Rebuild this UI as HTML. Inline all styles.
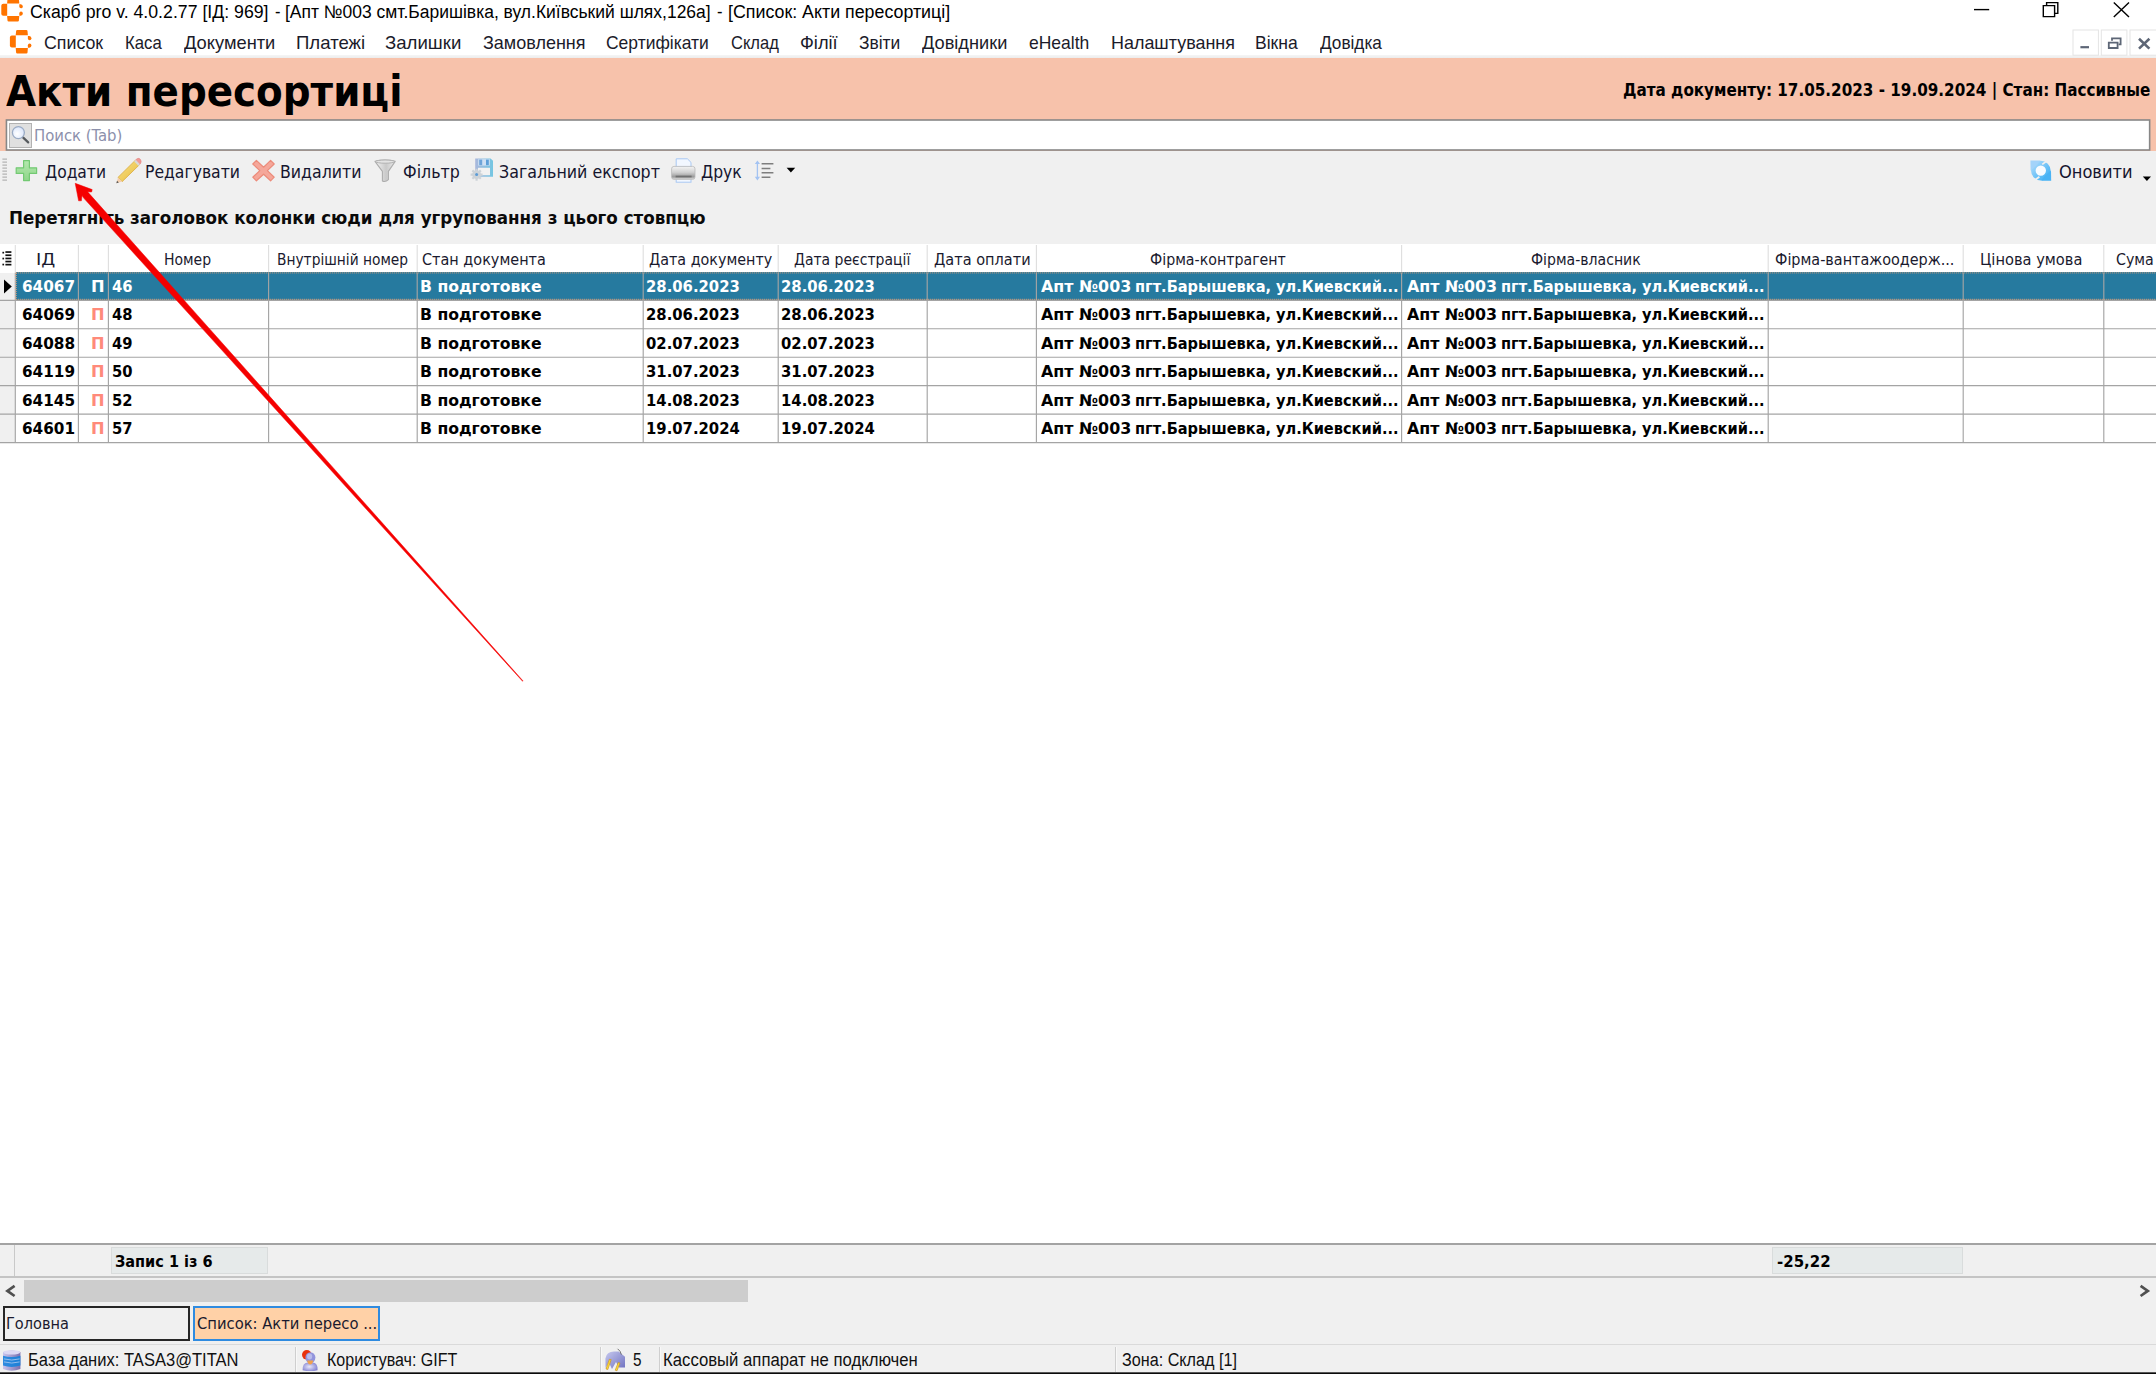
<!DOCTYPE html>
<html lang="uk">
<head>
<meta charset="utf-8">
<title>Скарб pro - Акти пересортиці</title>
<style>
html,body{margin:0;padding:0;}
body{width:2156px;height:1374px;position:relative;overflow:hidden;background:#fff;font-family:"DejaVu Sans Condensed","Liberation Sans",sans-serif;}
.a{position:absolute;}
.t{position:absolute;white-space:pre;line-height:normal;transform-origin:0 0;}
#titlebar{left:0;top:0;width:2156px;height:27px;background:#fff;}
#menubar{left:0;top:27px;width:2156px;height:28px;background:#fff;}
#menushadow{left:0;top:55px;width:2156px;height:3px;background:linear-gradient(#f6f6f6,#ececec);}
#header{left:0;top:58px;width:2156px;height:93px;background:#f7c2ab;}
#search{left:6px;top:120px;width:2144px;height:30px;background:#fff;}
#searchbtn{left:9px;top:123px;width:21px;height:23px;background:#e0e0e0;border:1px solid #b2b2b2;}
#toolbar{left:0;top:151px;width:2156px;height:42px;background:#f0f0f0;}
#grouppanel{left:0;top:193px;width:2156px;height:51px;background:#f0f0f0;}
#gridhead{left:0;top:244px;width:2156px;height:28.5px;background:#fff;}
#gridbody{left:0;top:272.5px;width:2156px;height:970px;background:#fff;}
#indic{left:0;top:272.5px;width:15px;height:170.5px;background:#f0f0f0;}
#selrow{left:15.6px;top:272.3px;width:2141px;height:27.6px;background:#267a9f;}
.hl{position:absolute;left:0;width:2156px;height:1.4px;background:#ababab;}
.vl{position:absolute;top:272.5px;width:1.3px;height:170.5px;background:#ababab;}
.svl{position:absolute;top:273px;width:1.3px;height:27px;background:#8ba9b8;}
.hvl{position:absolute;top:245px;width:1.5px;height:27px;background:#e3e3e3;}
#footer{left:0;top:1242.5px;width:2156px;height:34px;background:#f0f0f0;border-top:2.5px solid #a3a3a3;box-sizing:border-box;}
#footline{left:0;top:1276px;width:2156px;height:1.5px;background:#c4c4c4;}
#hscroll{left:0;top:1277.5px;width:2156px;height:27px;background:#f0f0f0;}
#thumb{left:23.7px;top:1279.5px;width:724.5px;height:22.5px;background:#cdcdcd;}
#tabs{left:0;top:1304px;width:2156px;height:40px;background:#f0f0f0;}
#tab1{left:3px;top:1306px;width:187px;height:35px;box-sizing:border-box;border:2px solid #262626;background:#f0f0f0;}
#tab2{left:193px;top:1306px;width:187px;height:35px;box-sizing:border-box;border:2px solid #2f8be0;background:#ffd1a7;}
#status{left:0;top:1344px;width:2156px;height:30px;background:#f0f0f0;border-top:1.5px solid #dadada;box-sizing:border-box;}
#statusbottom{left:0;top:1372px;width:2156px;height:2px;background:linear-gradient(#8c8c8c,#0a0a0a 60%);}
.ssep{position:absolute;top:1347px;width:1px;height:25px;background:#cfcfcf;border-right:1px solid #f8f8f8;}
.sumbox{position:absolute;top:1247.4px;height:27px;box-sizing:border-box;background:#e6eaea;border:1px solid #d9dcdc;}
</style>
</head>
<body>
<div id="titlebar" class="a"></div>
<div id="menubar" class="a"></div>
<div id="menushadow" class="a"></div>
<div id="header" class="a"></div>
<div id="search" class="a"></div>
<svg class="a" style="left:0;top:110px" width="2156" height="50" viewBox="0 110 2156 50"><rect x="6.45" y="120" width="2143.2" height="30" fill="none" stroke="#878787" stroke-width="1.6"/></svg>
<div id="searchbtn" class="a"></div>
<div id="toolbar" class="a"></div>
<div id="grouppanel" class="a"></div>
<div id="gridhead" class="a"></div>
<div id="gridbody" class="a"></div>
<div id="indic" class="a"></div>
<div id="selrow" class="a"></div>
<svg class="a" id="gridlines" style="left:0;top:0" width="2156" height="1374" viewBox="0 0 2156 1374">
<g stroke="#a4a4a4" stroke-width="1.15">
<path d="M0 300.35H2156"/>
<path d="M0 328.79H2156"/>
<path d="M0 357.23H2156"/>
<path d="M0 385.67H2156"/>
<path d="M0 414.11H2156"/>
<path d="M0 442.55H2156"/>
<path d="M15.30 272.5V443"/>
<path d="M78.40 272.5V443"/>
<path d="M108.40 272.5V443"/>
<path d="M268.60 272.5V443"/>
<path d="M417.20 272.5V443"/>
<path d="M643.20 272.5V443"/>
<path d="M778.20 272.5V443"/>
<path d="M927.20 272.5V443"/>
<path d="M1036.40 272.5V443"/>
<path d="M1401.60 272.5V443"/>
<path d="M1768.20 272.5V443"/>
<path d="M1963.20 272.5V443"/>
<path d="M2103.80 272.5V443"/>
</g>
<g stroke="#dedede" stroke-width="1.1">
<path d="M15.30 245V272"/>
<path d="M78.40 245V272"/>
<path d="M108.40 245V272"/>
<path d="M268.60 245V272"/>
<path d="M417.20 245V272"/>
<path d="M643.20 245V272"/>
<path d="M778.20 245V272"/>
<path d="M927.20 245V272"/>
<path d="M1036.40 245V272"/>
<path d="M1401.60 245V272"/>
<path d="M1768.20 245V272"/>
<path d="M1963.20 245V272"/>
<path d="M2103.80 245V272"/>
</g>
<g stroke="#e9a274" stroke-width="1" stroke-dasharray="1 1">
<path d="M15.8 272.9H2156"/><path d="M15.8 299.3H2156"/><path d="M16.2 273V299.5"/>
</g>
</svg>
<div id="footer" class="a"></div>
<div id="footline" class="a"></div>
<div class="a" style="left:14px;top:1245px;width:1px;height:31px;background:#c9c9c9"></div>
<div class="sumbox" style="left:111px;width:156.5px"></div>
<div class="sumbox" style="left:1771.5px;width:191.5px"></div>
<div id="hscroll" class="a"></div>
<div id="thumb" class="a"></div>
<div id="tabs" class="a"></div>
<div id="tab1" class="a"></div>
<div id="tab2" class="a"></div>
<div id="status" class="a"></div>
<div id="statusbottom" class="a"></div>
<div class="ssep" style="left:294.65px"></div>
<div class="ssep" style="left:600.45px"></div>
<div class="ssep" style="left:658.75px"></div>
<div class="ssep" style="left:1115.25px"></div>

<svg class="a" style="left:0;top:0" width="2156" height="1374" viewBox="0 0 2156 1374">
<defs>
<linearGradient id="gPlus" x1="0" y1="0" x2="0" y2="1"><stop offset="0" stop-color="#b4e8ae"/><stop offset="1" stop-color="#8fd68a"/></linearGradient>
<linearGradient id="gPen" x1="0" y1="0" x2="1" y2="1"><stop offset="0" stop-color="#f7e48a"/><stop offset="1" stop-color="#e9b93a"/></linearGradient>
<linearGradient id="gFun" x1="0" y1="0" x2="1" y2="0"><stop offset="0" stop-color="#f4f4f4"/><stop offset="0.55" stop-color="#c9c9c9"/><stop offset="1" stop-color="#ededed"/></linearGradient>
<linearGradient id="gFlop" x1="0" y1="0" x2="1" y2="0"><stop offset="0" stop-color="#aab8dc"/><stop offset="1" stop-color="#74c6e2"/></linearGradient>
<linearGradient id="gPrn" x1="0" y1="0" x2="0" y2="1"><stop offset="0" stop-color="#f4f4f4"/><stop offset="0.45" stop-color="#d2d2d2"/><stop offset="0.8" stop-color="#9a9a9a"/><stop offset="1" stop-color="#e2e2e2"/></linearGradient>
<linearGradient id="gRef" x1="0" y1="0" x2="1" y2="1"><stop offset="0" stop-color="#a9d9fb"/><stop offset="1" stop-color="#3fb0f4"/></linearGradient>
<radialGradient id="gLens" cx="0.4" cy="0.6" r="0.7"><stop offset="0" stop-color="#ffffff"/><stop offset="1" stop-color="#d6e2fb"/></radialGradient>
<linearGradient id="gDb" x1="0" y1="0" x2="1" y2="0"><stop offset="0" stop-color="#c9c4ec"/><stop offset="1" stop-color="#7a6fae"/></linearGradient>
<linearGradient id="gDbB" x1="0" y1="0" x2="1" y2="0"><stop offset="0" stop-color="#2f8be0"/><stop offset="1" stop-color="#1d7fd6"/></linearGradient>
<radialGradient id="gUsr" cx="0.45" cy="0.5" r="0.6"><stop offset="0" stop-color="#e8e8fb"/><stop offset="1" stop-color="#7f7fd0"/></radialGradient>
<linearGradient id="gPlug" x1="0" y1="0" x2="1" y2="1"><stop offset="0" stop-color="#c6c8ee"/><stop offset="1" stop-color="#6f71c0"/></linearGradient>
</defs>
<!-- app logos -->
<g id="logoT" fill="#ff7400">
<path d="M8.6 -2 H17.8 Q18.8 -2 18.9 -1 L19.3 3.4 H7.1 L7.5 -1 Q7.6 -2 8.6 -2Z"/>
<path d="M3.3 3.7 H7.2 V15.7 H3.3 Q1.3 15.7 1.3 13.7 V5.7 Q1.3 3.7 3.3 3.7Z"/>
<path d="M7.1 16 H19.3 L18.9 20.6 Q18.8 21.6 17.8 21.6 H8.6 Q7.6 21.6 7.5 20.6Z"/>
<path d="M19.3 4.2 H20.8 Q22.8 4.4 22.8 6.4 Q22.8 8.3 21 8.3 Q19.3 8.3 19.3 6.5Z"/>
<path d="M19.3 15.8 H20.8 Q22.8 15.6 22.8 13.6 Q22.8 11.5 21 11.5 Q19.3 11.5 19.3 13.4Z"/>
</g>
<g id="logoM" fill="#ff7400" transform="translate(8.6 31.9)">
<path d="M8.6 -2 H17.8 Q18.8 -2 18.9 -1 L19.3 3.4 H7.1 L7.5 -1 Q7.6 -2 8.6 -2Z"/>
<path d="M3.3 3.7 H7.2 V15.7 H3.3 Q1.3 15.7 1.3 13.7 V5.7 Q1.3 3.7 3.3 3.7Z"/>
<path d="M7.1 16 H19.3 L18.9 20.6 Q18.8 21.6 17.8 21.6 H8.6 Q7.6 21.6 7.5 20.6Z"/>
<path d="M19.3 4.2 H20.8 Q22.8 4.4 22.8 6.4 Q22.8 8.3 21 8.3 Q19.3 8.3 19.3 6.5Z"/>
<path d="M19.3 15.8 H20.8 Q22.8 15.6 22.8 13.6 Q22.8 11.5 21 11.5 Q19.3 11.5 19.3 13.4Z"/>
</g>
<!-- window controls -->
<g stroke="#000" stroke-width="1.4" fill="none">
<path d="M1974 9.6 H1989.2"/>
<path d="M2043.3 5.6 H2054.6 V16.6 H2043.3Z"/>
<path d="M2046.6 5.4 V2.6 H2057.8 V13.4 H2054.8"/>
<path d="M2113.8 2.4 L2129 17 M2129 2.4 L2113.8 17"/>
</g>
<!-- MDI child buttons -->
<g fill="#fff" stroke="#e4e4e4" stroke-width="1">
<rect x="2073" y="30" width="25.4" height="25.2"/>
<rect x="2101.3" y="30" width="25.6" height="25.2"/>
<rect x="2130" y="30" width="27" height="25.2"/>
</g>
<g fill="none" stroke="#5d6676" stroke-width="2.2">
<path d="M2080.4 47.2 H2089"/>
<path d="M2139 38.8 L2149.4 48.6 M2149.4 38.8 L2139 48.6" stroke-width="2.6"/>
<path d="M2108.8 42.6 H2117.6 V48 H2108.8Z" stroke-width="1.8"/>
<path d="M2112 40.8 V38.4 H2120.6 V44.4 H2118.6" stroke-width="1.8"/>
</g>
<!-- search magnifier -->
<path d="M23.2 137.6 L28.2 142.4" stroke="#565a5e" stroke-width="2.2" stroke-linecap="round"/>
<circle cx="18.4" cy="132.6" r="6" fill="url(#gLens)" stroke="#9aabc4" stroke-width="1.3"/>
<!-- toolbar grip -->
<g stroke="#b4b4b4" stroke-width="1.3">
<path d="M2.4 159.2H7M2.4 162.2H7M2.4 165.2H7M2.4 168.2H7M2.4 171.2H7M2.4 174.2H7M2.4 177.2H7M2.4 180.2H7"/>
</g>
<!-- plus -->
<path d="M23.6 160.6 H29.4 V167.8 H36.6 V173.4 H29.4 V180.6 H23.6 V173.4 H16.2 V167.8 H23.6Z" fill="url(#gPlus)" stroke="#73c973" stroke-width="1.2" stroke-linejoin="round"/>
<!-- pencil -->
<g>
<path d="M118 177.4 L135.4 160.2 L139.6 164.6 L122.2 181.6Z" fill="url(#gPen)" stroke="#d9a93a" stroke-width="0.8"/>
<path d="M135.4 160.2 L137 158.8 Q139 157.6 140.4 159.4 Q141.6 161.2 140.8 163 L139.6 164.6Z" fill="#f29a94" stroke="#e07a78" stroke-width="0.6"/>
<path d="M134.2 161.4 L135.8 159.8 L140 164.2 L138.4 165.8Z" fill="#d8d8d8"/>
<path d="M118 177.4 L122.2 181.6 L116.4 183.2Z" fill="#f5cfae"/>
<path d="M116.4 183.2 L117 180.8 L118.8 182.6Z" fill="#555"/>
</g>
<!-- delete X -->
<path d="M256.4 160.4 L263.6 167.2 L270.6 160.4 L274.2 164 L267.4 170.6 L274.2 177.2 L270.6 180.8 L263.6 174.2 L256.4 180.8 L252.8 177.2 L259.8 170.6 L252.8 164Z" fill="#f5a79a" stroke="#ec8b7a" stroke-width="1.2" stroke-linejoin="round"/>
<!-- funnel -->
<path d="M375 161.4 Q385 158.6 395.2 161.4 L388.4 171.4 V179.6 Q385.4 182.6 382.4 181 V171.4Z" fill="url(#gFun)" stroke="#adadad" stroke-width="1.1" stroke-linejoin="round"/>
<ellipse cx="385.1" cy="161.6" rx="9.6" ry="1.6" fill="#e4e4e4" stroke="#adadad" stroke-width="0.9"/>
<!-- floppy + gear -->
<path d="M475.2 158.6 H490.6 L493 160.8 V176.8 H475.2Z" fill="url(#gFlop)"/>
<rect x="478.2" y="159.2" width="11.6" height="6.4" fill="#cfe0f4"/>
<rect x="479.2" y="159.6" width="3" height="5.6" fill="#6fa4d8"/>
<rect x="486" y="159.6" width="2.8" height="5.6" fill="#5d9fd8"/>
<rect x="478" y="167.8" width="12" height="7.4" fill="#f2f2f2"/>
<g>
<circle cx="476.6" cy="174.6" r="4.4" fill="#cdd3d8"/>
<path d="M476.6 168.8 V180.8 M470.6 174.6 H482.6 M472.4 170.4 L480.8 178.8 M480.8 170.4 L472.4 178.8" stroke="#cdd3d8" stroke-width="2.2"/>
<circle cx="476.6" cy="174.6" r="1.5" fill="#5b9bd5"/>
</g>
<!-- printer -->
<path d="M676.2 158.8 H687.4 L691 162.4 V167 H676.2Z" fill="#f2f7ff" stroke="#a9c8f2" stroke-width="1"/>
<rect x="676.2" y="176" width="14.8" height="6.2" fill="#f2f7ff" stroke="#a9c8f2" stroke-width="1"/>
<rect x="671.6" y="166.4" width="23.4" height="13" rx="2.4" fill="url(#gPrn)" stroke="#b9b9b9" stroke-width="0.8"/>
<rect x="675.6" y="175.6" width="16" height="1.8" fill="#707070"/>
<!-- line spacing -->
<g stroke="#a3c3f2" stroke-width="1.3" fill="#a3c3f2">
<path d="M757.4 162 V179"/>
<path d="M757.4 160.4 L760 164 H754.8Z M757.4 180.4 L760 176.8 H754.8Z" stroke="none"/>
</g>
<g stroke="#7e7e7e" stroke-width="1.5">
<path d="M761.6 163.8 H773.4 M761.6 168.4 H770.4 M761.6 172.8 H773.4 M761.6 177.2 H770.4"/>
</g>
<path d="M786.6 167.8 H795.2 L790.9 172.4Z" fill="#000"/>
<!-- refresh -->
<g>
<circle cx="2040.8" cy="170.6" r="7.5" fill="#f7fbff" stroke="url(#gRef)" stroke-width="4.6"/>
<path d="M2042.2 164.4 L2047.6 160.4" stroke="#f0f0f0" stroke-width="1.8"/>
<path d="M2039.4 176.8 L2034 180.8" stroke="#f0f0f0" stroke-width="1.8"/>
<path d="M2030.4 160.6 H2040.4 L2036.4 165.6 L2030.6 170.6Z" fill="#a3d3fa"/>
<path d="M2051.2 180.8 H2041.2 L2045.2 175.8 L2051 170.6Z" fill="#49b3f5"/>
</g>
<path d="M2142.8 176.4 H2151 L2146.9 181Z" fill="#000"/>
<!-- header column-chooser icon -->
<g fill="#111">
<rect x="2.4" y="251.8" width="1.7" height="1.7"/><rect x="2.4" y="257.7" width="1.7" height="1.7"/><rect x="2.4" y="263.7" width="1.7" height="1.7"/>
<rect x="5.4" y="251.2" width="6" height="1.7"/><rect x="5.4" y="254.4" width="6" height="1.7"/><rect x="5.4" y="257.6" width="6" height="1.7"/><rect x="5.4" y="260.7" width="6" height="1.7"/><rect x="5.4" y="263.8" width="6" height="1.7"/>
</g>
<!-- row indicator -->
<path d="M4 279.6 L11.8 286.6 L4 293.6Z" fill="#000"/>
<!-- scrollbar arrows -->
<g fill="none" stroke="#505050" stroke-width="2.7">
<path d="M14.6 1285.8 L7.4 1290.9 L14.6 1296"/>
<path d="M2140.6 1285.8 L2147.8 1290.9 L2140.6 1296"/>
</g>
<!-- status icons: database -->
<g>
<path d="M3 1352 Q11.6 1349 20.4 1352 V1369 Q11.6 1372.6 3 1369Z" fill="url(#gDb)"/>
<path d="M3 1355.8 Q11.6 1358.4 20.4 1355.8 V1365.6 Q11.6 1368.2 3 1365.6Z" fill="url(#gDbB)"/>
<path d="M4 1358.9 Q11.6 1361.2 19.6 1358.9 M4 1361.9 Q11.6 1364.2 19.6 1361.9" stroke="#9fc4ee" stroke-width="0.9" fill="none"/>
<ellipse cx="11.7" cy="1352.4" rx="8.4" ry="2.2" fill="#dcd8f4"/>
</g>
<!-- user -->
<g>
<circle cx="306.8" cy="1354.8" r="4.8" fill="#e9310c"/>
<path d="M302.6 1370.2 Q302.2 1363 307.6 1362.4 H313 Q318 1363 317.6 1370.2 Q310 1372 302.6 1370.2Z" fill="url(#gUsr)"/>
<ellipse cx="310.4" cy="1357.6" rx="5" ry="5.4" fill="#9294dc"/>
<ellipse cx="309.6" cy="1356.6" rx="2.6" ry="3" fill="#b9bbea"/>
<path d="M307.2 1360.6 H313.2 Q312.6 1364.4 310.2 1364.6 Q307.8 1364.4 307.2 1360.6Z" fill="#f1a04a"/>
</g>
<!-- plug -->
<g>
<path d="M605.4 1358.4 Q606.6 1351.6 614 1351.6 H618.6 L625 1356.8 V1367.6 H619 L616 1362 L612 1369 L608.6 1362 L605.6 1368Z" fill="url(#gPlug)"/>
<path d="M617.6 1348.8 Q620.6 1350.8 621.4 1354.6" stroke="#666" stroke-width="0.9" fill="none"/>
<path d="M609.4 1359.2 L611.2 1359.6 L607.8 1369.6 L606 1369Z" fill="#f7d93a" stroke="#c98d1a" stroke-width="0.6"/>
<path d="M618.2 1362.6 L620 1363 L617 1370.8 L615.2 1370.2Z" fill="#f7d93a" stroke="#c98d1a" stroke-width="0.6"/>
</g>
</svg>

<div class="sec" id="title">
<span class="t" style="left:30.0px;top:2px;font:400 18px 'Liberation Sans','DejaVu Sans',sans-serif;color:#000;transform:scaleX(0.9832);">Скарб pro v. 4.0.2.77 [ІД: 969]</span>
<span class="t" style="left:275.3px;top:2px;font:400 18px 'Liberation Sans','DejaVu Sans',sans-serif;color:#000;transform:scaleX(0.9167);">-</span>
<span class="t" style="left:285.33px;top:2px;font:400 18px 'Liberation Sans','DejaVu Sans',sans-serif;color:#000;transform:scaleX(0.9709);">[Апт №003 смт.Баришівка, вул.Київський шлях,126а]</span>
<span class="t" style="left:716.8px;top:2px;font:400 18px 'Liberation Sans','DejaVu Sans',sans-serif;color:#000;transform:scaleX(0.9167);">-</span>
<span class="t" style="left:727.81px;top:2px;font:400 18px 'Liberation Sans','DejaVu Sans',sans-serif;color:#000;transform:scaleX(0.9897);">[Список: Акти пересортиці]</span>
</div>
<div class="sec" id="menu">
<span class="t" style="left:44.0px;top:32px;font:400 18.5px 'Liberation Sans','DejaVu Sans',sans-serif;color:#1b1b2a;transform:scaleX(0.9606);">Список</span>
<span class="t" style="left:125.09px;top:32px;font:400 18.5px 'Liberation Sans','DejaVu Sans',sans-serif;color:#1b1b2a;transform:scaleX(0.9054);">Каса</span>
<span class="t" style="left:184.0px;top:32px;font:400 18.5px 'Liberation Sans','DejaVu Sans',sans-serif;color:#1b1b2a;transform:scaleX(0.9884);">Документи</span>
<span class="t" style="left:296.0px;top:32px;font:400 18.5px 'Liberation Sans','DejaVu Sans',sans-serif;color:#1b1b2a;transform:scaleX(1.0046);">Платежі</span>
<span class="t" style="left:385.0px;top:32px;font:400 18.5px 'Liberation Sans','DejaVu Sans',sans-serif;color:#1b1b2a;transform:scaleX(1.0063);">Залишки</span>
<span class="t" style="left:482.5px;top:32px;font:400 18.5px 'Liberation Sans','DejaVu Sans',sans-serif;color:#1b1b2a;transform:scaleX(0.9723);">Замовлення</span>
<span class="t" style="left:606.0px;top:32px;font:400 18.5px 'Liberation Sans','DejaVu Sans',sans-serif;color:#1b1b2a;transform:scaleX(0.9445);">Сертифікати</span>
<span class="t" style="left:731.0px;top:32px;font:400 18.5px 'Liberation Sans','DejaVu Sans',sans-serif;color:#1b1b2a;transform:scaleX(0.8931);">Склад</span>
<span class="t" style="left:800.02px;top:32px;font:400 18.5px 'Liberation Sans','DejaVu Sans',sans-serif;color:#1b1b2a;transform:scaleX(0.9844);">Філії</span>
<span class="t" style="left:859.0px;top:32px;font:400 18.5px 'Liberation Sans','DejaVu Sans',sans-serif;color:#1b1b2a;transform:scaleX(0.9407);">Звіти</span>
<span class="t" style="left:921.5px;top:32px;font:400 18.5px 'Liberation Sans','DejaVu Sans',sans-serif;color:#1b1b2a;transform:scaleX(0.9838);">Довідники</span>
<span class="t" style="left:1029.0px;top:32px;font:400 18.5px 'Liberation Sans','DejaVu Sans',sans-serif;color:#1b1b2a;transform:scaleX(0.9452);">eHealth</span>
<span class="t" style="left:1110.53px;top:32px;font:400 18.5px 'Liberation Sans','DejaVu Sans',sans-serif;color:#1b1b2a;transform:scaleX(0.9694);">Налаштування</span>
<span class="t" style="left:1254.55px;top:32px;font:400 18.5px 'Liberation Sans','DejaVu Sans',sans-serif;color:#1b1b2a;transform:scaleX(0.9495);">Вікна</span>
<span class="t" style="left:1319.5px;top:32px;font:400 18.5px 'Liberation Sans','DejaVu Sans',sans-serif;color:#1b1b2a;transform:scaleX(0.9292);">Довідка</span>
</div>
<div class="sec" id="pagehead">
<span class="t" style="left:5.8px;top:66px;font:700 43px 'DejaVu Sans Condensed','Liberation Sans',sans-serif;color:#000;transform:scaleX(1.0043);">Акти пересортиці</span>
<span class="t" style="left:1622.6px;top:80px;font:700 17px 'DejaVu Sans Condensed','Liberation Sans',sans-serif;color:#000;transform:scaleX(0.9931);">Дата документу: 17.05.2023 - 19.09.2024 | Стан: Пассивные</span>
<span class="t" style="left:34.37px;top:126px;font:400 16px 'DejaVu Sans Condensed','Liberation Sans',sans-serif;color:#8c90ab;transform:scaleX(1.0324);">Поиск (Tab)</span>
</div>
<div class="sec" id="toolbar-items">
<span class="t" style="left:44.5px;top:161px;font:400 18px 'DejaVu Sans Condensed','Liberation Sans',sans-serif;color:#15152e;transform:scaleX(0.9586);">Додати</span>
<span class="t" style="left:145.03px;top:161px;font:400 18px 'DejaVu Sans Condensed','Liberation Sans',sans-serif;color:#15152e;transform:scaleX(0.9655);">Редагувати</span>
<span class="t" style="left:280.02px;top:161px;font:400 18px 'DejaVu Sans Condensed','Liberation Sans',sans-serif;color:#15152e;transform:scaleX(0.975);">Видалити</span>
<span class="t" style="left:402.5px;top:161px;font:400 18px 'DejaVu Sans Condensed','Liberation Sans',sans-serif;color:#15152e;transform:scaleX(0.978);">Фільтр</span>
<span class="t" style="left:499.02px;top:161px;font:400 18px 'DejaVu Sans Condensed','Liberation Sans',sans-serif;color:#15152e;transform:scaleX(0.9795);">Загальний експорт</span>
<span class="t" style="left:701.0px;top:161px;font:400 18px 'DejaVu Sans Condensed','Liberation Sans',sans-serif;color:#15152e;transform:scaleX(0.9643);">Друк</span>
<span class="t" style="left:2059.0px;top:161px;font:400 18px 'DejaVu Sans Condensed','Liberation Sans',sans-serif;color:#15152e;transform:scaleX(1.0036);">Оновити</span>
</div>
<div class="sec" id="group-hint">
<span class="t" style="left:9.27px;top:207.4px;font:700 18px 'DejaVu Sans Condensed','Liberation Sans',sans-serif;color:#0a0a0a;transform:scaleX(1.0319);">Перетягніть заголовок колонки сюди для угруповання з цього стовпцю</span>
</div>
<div class="sec" id="grid-columns">
<span class="t" style="left:36.06px;top:250px;font:400 16px 'DejaVu Sans Condensed','Liberation Sans',sans-serif;color:#1a1a2e;transform:scaleX(1.2428);">ІД</span>
<span class="t" style="left:164.03px;top:250px;font:400 16px 'DejaVu Sans Condensed','Liberation Sans',sans-serif;color:#1a1a2e;transform:scaleX(0.9715);">Номер</span>
<span class="t" style="left:276.54px;top:250px;font:400 16px 'DejaVu Sans Condensed','Liberation Sans',sans-serif;color:#1a1a2e;transform:scaleX(0.9575);">Внутрішній номер</span>
<span class="t" style="left:422.0px;top:250px;font:400 16px 'DejaVu Sans Condensed','Liberation Sans',sans-serif;color:#1a1a2e;transform:scaleX(1.0022);">Стан документа</span>
<span class="t" style="left:648.75px;top:250px;font:400 16px 'DejaVu Sans Condensed','Liberation Sans',sans-serif;color:#1a1a2e;transform:scaleX(0.9954);">Дата документу</span>
<span class="t" style="left:793.75px;top:250px;font:400 16px 'DejaVu Sans Condensed','Liberation Sans',sans-serif;color:#1a1a2e;transform:scaleX(0.9706);">Дата реєстрації</span>
<span class="t" style="left:933.75px;top:250px;font:400 16px 'DejaVu Sans Condensed','Liberation Sans',sans-serif;color:#1a1a2e;transform:scaleX(1.0082);">Дата оплати</span>
<span class="t" style="left:1150.0px;top:250px;font:400 16px 'DejaVu Sans Condensed','Liberation Sans',sans-serif;color:#1a1a2e;transform:scaleX(0.9855);">Фірма-контрагент</span>
<span class="t" style="left:1530.5px;top:250px;font:400 16px 'DejaVu Sans Condensed','Liberation Sans',sans-serif;color:#1a1a2e;transform:scaleX(0.977);">Фірма-власник</span>
<span class="t" style="left:1774.75px;top:250px;font:400 16px 'DejaVu Sans Condensed','Liberation Sans',sans-serif;color:#1a1a2e;transform:scaleX(0.9988);">Фірма-вантажоодерж...</span>
<span class="t" style="left:1980.48px;top:250px;font:400 16px 'DejaVu Sans Condensed','Liberation Sans',sans-serif;color:#1a1a2e;transform:scaleX(1.0158);">Цінова умова</span>
<span class="t" style="left:2115.5px;top:250px;font:400 16px 'DejaVu Sans Condensed','Liberation Sans',sans-serif;color:#1a1a2e;transform:scaleX(0.9885);">Сума</span>
</div>
<div class="sec" id="grid-rows">
<span class="t" style="left:22.0px;top:277px;font:700 16px 'DejaVu Sans Condensed','Liberation Sans',sans-serif;color:#fff;transform:scaleX(1.0599);">64067</span>
<span class="t" style="left:91.38px;top:277px;font:700 16px 'DejaVu Sans Condensed','Liberation Sans',sans-serif;color:#fff;transform:scaleX(1.125);">П</span>
<span class="t" style="left:112.0px;top:277px;font:700 16px 'DejaVu Sans Condensed','Liberation Sans',sans-serif;color:#fff;transform:scaleX(1.0242);">46</span>
<span class="t" style="left:420.16px;top:277px;font:700 16px 'DejaVu Sans Condensed','Liberation Sans',sans-serif;color:#fff;transform:scaleX(1.0881);">В подготовке</span>
<span class="t" style="left:646.47px;top:277px;font:700 16px 'DejaVu Sans Condensed','Liberation Sans',sans-serif;color:#fff;transform:scaleX(1.0304);">28.06.2023</span>
<span class="t" style="left:781.47px;top:277px;font:700 16px 'DejaVu Sans Condensed','Liberation Sans',sans-serif;color:#fff;transform:scaleX(1.0304);">28.06.2023</span>
<span class="t" style="left:1040.6px;top:277px;font:700 16px 'DejaVu Sans Condensed','Liberation Sans',sans-serif;color:#fff;transform:scaleX(1.1029);">Апт №003</span>
<span class="t" style="left:1134.99px;top:277px;font:700 16px 'DejaVu Sans Condensed','Liberation Sans',sans-serif;color:#fff;transform:scaleX(1.0118);">пгт.Барышевка, ул.Киевский...</span>
<span class="t" style="left:1406.9px;top:277px;font:700 16px 'DejaVu Sans Condensed','Liberation Sans',sans-serif;color:#fff;transform:scaleX(1.1004);">Апт №003</span>
<span class="t" style="left:1500.99px;top:277px;font:700 16px 'DejaVu Sans Condensed','Liberation Sans',sans-serif;color:#fff;transform:scaleX(1.0118);">пгт.Барышевка, ул.Киевский...</span>
<span class="t" style="left:22.0px;top:305px;font:700 16px 'DejaVu Sans Condensed','Liberation Sans',sans-serif;color:#000;transform:scaleX(1.0599);">64069</span>
<span class="t" style="left:91.38px;top:305px;font:700 16px 'DejaVu Sans Condensed','Liberation Sans',sans-serif;color:#ff8a7a;transform:scaleX(1.125);">П</span>
<span class="t" style="left:112.0px;top:305px;font:700 16px 'DejaVu Sans Condensed','Liberation Sans',sans-serif;color:#000;transform:scaleX(1.0242);">48</span>
<span class="t" style="left:420.16px;top:305px;font:700 16px 'DejaVu Sans Condensed','Liberation Sans',sans-serif;color:#000;transform:scaleX(1.0881);">В подготовке</span>
<span class="t" style="left:646.47px;top:305px;font:700 16px 'DejaVu Sans Condensed','Liberation Sans',sans-serif;color:#000;transform:scaleX(1.0304);">28.06.2023</span>
<span class="t" style="left:781.47px;top:305px;font:700 16px 'DejaVu Sans Condensed','Liberation Sans',sans-serif;color:#000;transform:scaleX(1.0304);">28.06.2023</span>
<span class="t" style="left:1040.6px;top:305px;font:700 16px 'DejaVu Sans Condensed','Liberation Sans',sans-serif;color:#000;transform:scaleX(1.1029);">Апт №003</span>
<span class="t" style="left:1134.99px;top:305px;font:700 16px 'DejaVu Sans Condensed','Liberation Sans',sans-serif;color:#000;transform:scaleX(1.0118);">пгт.Барышевка, ул.Киевский...</span>
<span class="t" style="left:1406.9px;top:305px;font:700 16px 'DejaVu Sans Condensed','Liberation Sans',sans-serif;color:#000;transform:scaleX(1.1004);">Апт №003</span>
<span class="t" style="left:1500.99px;top:305px;font:700 16px 'DejaVu Sans Condensed','Liberation Sans',sans-serif;color:#000;transform:scaleX(1.0118);">пгт.Барышевка, ул.Киевский...</span>
<span class="t" style="left:22.0px;top:334px;font:700 16px 'DejaVu Sans Condensed','Liberation Sans',sans-serif;color:#000;transform:scaleX(1.0599);">64088</span>
<span class="t" style="left:91.38px;top:334px;font:700 16px 'DejaVu Sans Condensed','Liberation Sans',sans-serif;color:#ff8a7a;transform:scaleX(1.125);">П</span>
<span class="t" style="left:112.0px;top:334px;font:700 16px 'DejaVu Sans Condensed','Liberation Sans',sans-serif;color:#000;transform:scaleX(1.0242);">49</span>
<span class="t" style="left:420.16px;top:334px;font:700 16px 'DejaVu Sans Condensed','Liberation Sans',sans-serif;color:#000;transform:scaleX(1.0881);">В подготовке</span>
<span class="t" style="left:646.47px;top:334px;font:700 16px 'DejaVu Sans Condensed','Liberation Sans',sans-serif;color:#000;transform:scaleX(1.0304);">02.07.2023</span>
<span class="t" style="left:781.47px;top:334px;font:700 16px 'DejaVu Sans Condensed','Liberation Sans',sans-serif;color:#000;transform:scaleX(1.0304);">02.07.2023</span>
<span class="t" style="left:1040.6px;top:334px;font:700 16px 'DejaVu Sans Condensed','Liberation Sans',sans-serif;color:#000;transform:scaleX(1.1029);">Апт №003</span>
<span class="t" style="left:1134.99px;top:334px;font:700 16px 'DejaVu Sans Condensed','Liberation Sans',sans-serif;color:#000;transform:scaleX(1.0118);">пгт.Барышевка, ул.Киевский...</span>
<span class="t" style="left:1406.9px;top:334px;font:700 16px 'DejaVu Sans Condensed','Liberation Sans',sans-serif;color:#000;transform:scaleX(1.1004);">Апт №003</span>
<span class="t" style="left:1500.99px;top:334px;font:700 16px 'DejaVu Sans Condensed','Liberation Sans',sans-serif;color:#000;transform:scaleX(1.0118);">пгт.Барышевка, ул.Киевский...</span>
<span class="t" style="left:22.0px;top:362px;font:700 16px 'DejaVu Sans Condensed','Liberation Sans',sans-serif;color:#000;transform:scaleX(1.0599);">64119</span>
<span class="t" style="left:91.38px;top:362px;font:700 16px 'DejaVu Sans Condensed','Liberation Sans',sans-serif;color:#ff8a7a;transform:scaleX(1.125);">П</span>
<span class="t" style="left:112.0px;top:362px;font:700 16px 'DejaVu Sans Condensed','Liberation Sans',sans-serif;color:#000;transform:scaleX(1.0242);">50</span>
<span class="t" style="left:420.16px;top:362px;font:700 16px 'DejaVu Sans Condensed','Liberation Sans',sans-serif;color:#000;transform:scaleX(1.0881);">В подготовке</span>
<span class="t" style="left:646.47px;top:362px;font:700 16px 'DejaVu Sans Condensed','Liberation Sans',sans-serif;color:#000;transform:scaleX(1.0304);">31.07.2023</span>
<span class="t" style="left:781.47px;top:362px;font:700 16px 'DejaVu Sans Condensed','Liberation Sans',sans-serif;color:#000;transform:scaleX(1.0304);">31.07.2023</span>
<span class="t" style="left:1040.6px;top:362px;font:700 16px 'DejaVu Sans Condensed','Liberation Sans',sans-serif;color:#000;transform:scaleX(1.1029);">Апт №003</span>
<span class="t" style="left:1134.99px;top:362px;font:700 16px 'DejaVu Sans Condensed','Liberation Sans',sans-serif;color:#000;transform:scaleX(1.0118);">пгт.Барышевка, ул.Киевский...</span>
<span class="t" style="left:1406.9px;top:362px;font:700 16px 'DejaVu Sans Condensed','Liberation Sans',sans-serif;color:#000;transform:scaleX(1.1004);">Апт №003</span>
<span class="t" style="left:1500.99px;top:362px;font:700 16px 'DejaVu Sans Condensed','Liberation Sans',sans-serif;color:#000;transform:scaleX(1.0118);">пгт.Барышевка, ул.Киевский...</span>
<span class="t" style="left:22.0px;top:391px;font:700 16px 'DejaVu Sans Condensed','Liberation Sans',sans-serif;color:#000;transform:scaleX(1.0599);">64145</span>
<span class="t" style="left:91.38px;top:391px;font:700 16px 'DejaVu Sans Condensed','Liberation Sans',sans-serif;color:#ff8a7a;transform:scaleX(1.125);">П</span>
<span class="t" style="left:112.0px;top:391px;font:700 16px 'DejaVu Sans Condensed','Liberation Sans',sans-serif;color:#000;transform:scaleX(1.0242);">52</span>
<span class="t" style="left:420.16px;top:391px;font:700 16px 'DejaVu Sans Condensed','Liberation Sans',sans-serif;color:#000;transform:scaleX(1.0881);">В подготовке</span>
<span class="t" style="left:646.47px;top:391px;font:700 16px 'DejaVu Sans Condensed','Liberation Sans',sans-serif;color:#000;transform:scaleX(1.0304);">14.08.2023</span>
<span class="t" style="left:781.47px;top:391px;font:700 16px 'DejaVu Sans Condensed','Liberation Sans',sans-serif;color:#000;transform:scaleX(1.0304);">14.08.2023</span>
<span class="t" style="left:1040.6px;top:391px;font:700 16px 'DejaVu Sans Condensed','Liberation Sans',sans-serif;color:#000;transform:scaleX(1.1029);">Апт №003</span>
<span class="t" style="left:1134.99px;top:391px;font:700 16px 'DejaVu Sans Condensed','Liberation Sans',sans-serif;color:#000;transform:scaleX(1.0118);">пгт.Барышевка, ул.Киевский...</span>
<span class="t" style="left:1406.9px;top:391px;font:700 16px 'DejaVu Sans Condensed','Liberation Sans',sans-serif;color:#000;transform:scaleX(1.1004);">Апт №003</span>
<span class="t" style="left:1500.99px;top:391px;font:700 16px 'DejaVu Sans Condensed','Liberation Sans',sans-serif;color:#000;transform:scaleX(1.0118);">пгт.Барышевка, ул.Киевский...</span>
<span class="t" style="left:22.0px;top:419px;font:700 16px 'DejaVu Sans Condensed','Liberation Sans',sans-serif;color:#000;transform:scaleX(1.0599);">64601</span>
<span class="t" style="left:91.38px;top:419px;font:700 16px 'DejaVu Sans Condensed','Liberation Sans',sans-serif;color:#ff8a7a;transform:scaleX(1.125);">П</span>
<span class="t" style="left:112.0px;top:419px;font:700 16px 'DejaVu Sans Condensed','Liberation Sans',sans-serif;color:#000;transform:scaleX(1.0242);">57</span>
<span class="t" style="left:420.16px;top:419px;font:700 16px 'DejaVu Sans Condensed','Liberation Sans',sans-serif;color:#000;transform:scaleX(1.0881);">В подготовке</span>
<span class="t" style="left:646.47px;top:419px;font:700 16px 'DejaVu Sans Condensed','Liberation Sans',sans-serif;color:#000;transform:scaleX(1.0304);">19.07.2024</span>
<span class="t" style="left:781.47px;top:419px;font:700 16px 'DejaVu Sans Condensed','Liberation Sans',sans-serif;color:#000;transform:scaleX(1.0304);">19.07.2024</span>
<span class="t" style="left:1040.6px;top:419px;font:700 16px 'DejaVu Sans Condensed','Liberation Sans',sans-serif;color:#000;transform:scaleX(1.1029);">Апт №003</span>
<span class="t" style="left:1134.99px;top:419px;font:700 16px 'DejaVu Sans Condensed','Liberation Sans',sans-serif;color:#000;transform:scaleX(1.0118);">пгт.Барышевка, ул.Киевский...</span>
<span class="t" style="left:1406.9px;top:419px;font:700 16px 'DejaVu Sans Condensed','Liberation Sans',sans-serif;color:#000;transform:scaleX(1.1004);">Апт №003</span>
<span class="t" style="left:1500.99px;top:419px;font:700 16px 'DejaVu Sans Condensed','Liberation Sans',sans-serif;color:#000;transform:scaleX(1.0118);">пгт.Барышевка, ул.Киевский...</span>
</div>
<div class="sec" id="grid-footer">
<span class="t" style="left:114.9px;top:1252px;font:700 16px 'DejaVu Sans Condensed','Liberation Sans',sans-serif;color:#000;transform:scaleX(1.0069);">Запис 1 із 6</span>
<span class="t" style="left:1776.5px;top:1252px;font:700 16px 'DejaVu Sans Condensed','Liberation Sans',sans-serif;color:#000;transform:scaleX(1.0398);">-25,22</span>
</div>
<div class="sec" id="window-tabs">
<span class="t" style="left:6.39px;top:1314px;font:400 16px 'DejaVu Sans Condensed','Liberation Sans',sans-serif;color:#1a1a2e;transform:scaleX(1.01);">Головна</span>
<span class="t" style="left:197.0px;top:1314px;font:400 16px 'DejaVu Sans Condensed','Liberation Sans',sans-serif;color:#1a1a2e;transform:scaleX(1.0251);">Список: Акти пересо ...</span>
</div>
<div class="sec" id="statusbar-items">
<span class="t" style="left:27.88px;top:1350px;font:400 18px 'Liberation Sans','DejaVu Sans',sans-serif;color:#111;transform:scaleX(0.9193);">База даних: TASA3@TITAN</span>
<span class="t" style="left:326.61px;top:1350px;font:400 18px 'Liberation Sans','DejaVu Sans',sans-serif;color:#111;transform:scaleX(0.8909);">Користувач: GIFT</span>
<span class="t" style="left:632.5px;top:1350px;font:400 18px 'Liberation Sans','DejaVu Sans',sans-serif;color:#111;transform:scaleX(0.85);">5</span>
<span class="t" style="left:663.07px;top:1350px;font:400 18px 'Liberation Sans','DejaVu Sans',sans-serif;color:#111;transform:scaleX(0.9283);">Кассовый аппарат не подключен</span>
<span class="t" style="left:1122.0px;top:1350px;font:400 18px 'Liberation Sans','DejaVu Sans',sans-serif;color:#111;transform:scaleX(0.8981);">Зона: Склад [1]</span>
</div>
<svg class="a" style="left:0;top:0" width="2156" height="1374" viewBox="0 0 2156 1374">
<path d="M75.2 183.3 L92.2 189.6 L91.6 192.0 L87.6 191.8 L89.2 193.6 L125.4 234.2 L161.5 274.8 L197.6 315.4 L233.8 356.0 L269.9 396.6 L306.1 437.2 L342.2 477.9 L378.4 518.5 L414.5 559.1 L450.7 599.7 L486.8 640.3 L523.0 680.9 L522.6 681.3 L486.1 641.0 L449.5 600.8 L412.9 560.5 L376.4 520.3 L339.8 480.0 L303.3 439.8 L266.7 399.5 L230.2 359.3 L193.6 319.1 L157.0 278.8 L120.5 238.6 L83.9 198.3 L82.0 195.6 L81.4 200.8 L78.6 200.8Z" fill="#f50000" stroke="#f50000" stroke-width="0.5" stroke-linejoin="round"/>
</svg>
</body>
</html>
